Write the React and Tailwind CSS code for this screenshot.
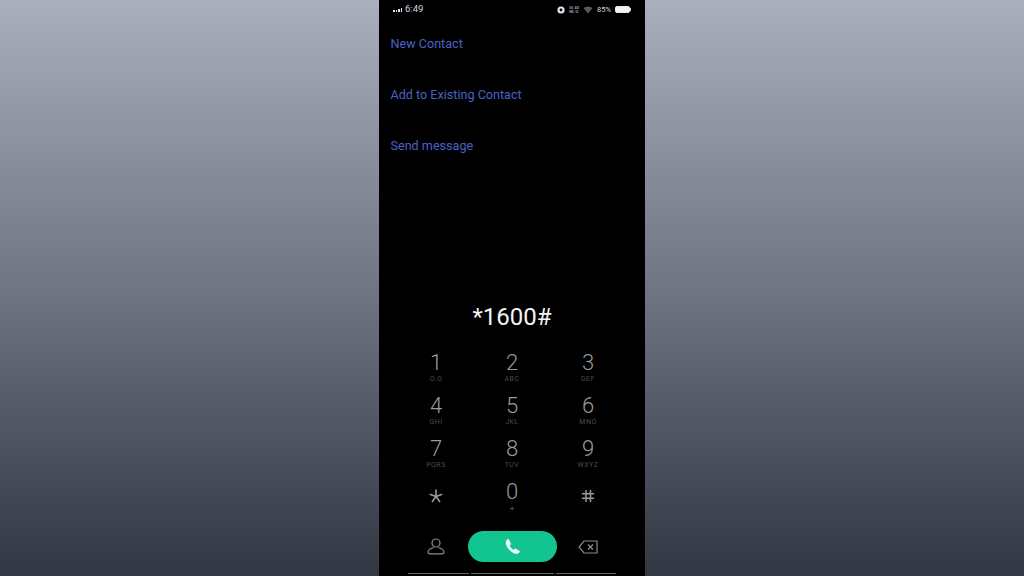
import React from 'react';

const keys = [
  ['1', 'O.O'],
  ['2', 'ABC'],
  ['3', 'DEF'],
  ['4', 'GHI'],
  ['5', 'JKL'],
  ['6', 'MNO'],
  ['7', 'PQRS'],
  ['8', 'TUV'],
  ['9', 'WXYZ'],
];

const StatusBar = () => (
  <div className="h-[17px] mt-[1px] mb-[1px] flex items-center justify-between pl-[14px] pr-[14px] text-[8px] text-gray-300">
    <div className="flex items-center gap-[3px]">
      <div className="flex items-end gap-[1px] h-[5px]">
        <div className="w-[1.5px] h-[2px] bg-gray-200" />
        <div className="w-[1.5px] h-[2px] bg-gray-200" />
        <div className="w-[1.5px] h-[3px] bg-gray-200" />
        <div className="w-[1.5px] h-[4px] bg-gray-200" />
      </div>
      <span className="text-[9.5px]">6:49</span>
    </div>
    <div className="flex items-center">
      <svg width="8" height="8" viewBox="0 0 8 8" className="mr-[4px]">
        <circle cx="4" cy="4" r="3.6" fill="#e5e7eb" />
        <circle cx="4" cy="4" r="1.4" fill="#000" />
      </svg>
      <div className="grid grid-cols-2 gap-x-[1px] mr-[4px] text-[3.5px] leading-[4px] font-bold text-gray-400">
        <span>56</span>
        <span>4G</span>
        <span>KB</span>
        <span>/S</span>
      </div>
      <svg width="10" height="8" viewBox="0 0 10 8" className="mr-[4px]">
        <path d="M0.5 2 Q5 -1 9.5 2 L5 7.5 Z" fill="#565a62" />
      </svg>
      <span className="text-[7.5px] mr-[4px]">85%</span>
      <div className="flex items-center">
        <div className="w-[15px] h-[7px] rounded-[2px] border border-gray-200 bg-gray-100" />
        <div className="w-[1px] h-[3px] bg-gray-300" />
      </div>
    </div>
  </div>
);

const App = () => {
  return (
    <div className="w-[1024px] h-[576px] overflow-hidden flex justify-center bg-gradient-to-b from-[#a9afbc] via-[#6f7582] to-[#323744] font-['Roboto',sans-serif]">
      <div className="w-[266px] h-full bg-black flex flex-col">
        <StatusBar />

        <div className="flex flex-col pl-[11.5px] text-[12.6px] text-[#4a60c8]">
          <div className="h-[51px] flex items-center">New Contact</div>
          <div className="h-[51px] flex items-center">Add to Existing Contact</div>
          <div className="h-[51px] flex items-center">Send message</div>
        </div>

        <div className="mt-[129px] h-[32px] flex items-center justify-center text-[24px] text-gray-100">
          *1600#
        </div>

        <div className="mt-[18px] px-[19px] grid grid-cols-3 text-[#9a9a9a]">
          {keys.map(([digit, sub]) => (
            <div key={digit} className="h-[43px] flex flex-col items-center">
              <span className="text-[22px] font-light leading-[24px]">{digit}</span>
              <span className="text-[7px] leading-[8px] tracking-[0.5px] text-[#4d4d4d]">{sub}</span>
            </div>
          ))}
          <div className="h-[43px] flex items-center justify-center pb-[11px]">
            <svg width="14" height="14" viewBox="0 0 14 14" fill="none" stroke="#9a9a9a" strokeWidth="1.6">
              <path d="M7 0.5V7.5M7 7.5L0.8 5.3M7 7.5L13.2 5.3M7 7.5L3 13M7 7.5L11 13" />
            </svg>
          </div>
          <div className="h-[43px] flex flex-col items-center">
            <span className="text-[22px] font-light leading-[24px]">0</span>
            <span className="text-[9px] leading-[10px] text-[#4d4d4d]">+</span>
          </div>
          <div className="h-[43px] flex items-center justify-center pb-[11px]">
            <svg width="14" height="14" viewBox="0 0 14 14" fill="none" stroke="#9a9a9a" strokeWidth="1.5">
              <path d="M5 1V13M9.5 1V13M1 4.7H13M1 9.3H13" />
            </svg>
          </div>
        </div>

        <div className="mt-[8px] px-[19px] grid grid-cols-3 items-center">
          <div className="flex justify-center">
            <svg width="18" height="17" viewBox="0 0 18 17" fill="none" stroke="#8a8a8a" strokeWidth="1.2">
              <circle cx="9" cy="5" r="4" />
              <path d="M6.5 9.5C3.5 10.5 1 12 1 14C1 15.4 2 15.8 3 15.8H15C16 15.8 17 15.4 17 14C17 12 14.5 10.5 11.5 9.5" />
            </svg>
          </div>
          <div className="flex justify-center">
            <div className="w-[89px] h-[31px] shrink-0 rounded-full bg-[#12c48f] flex items-center justify-center">
              <svg width="17" height="17" viewBox="0 0 24 24" fill="#f3fff9">
                <path d="M6.6 1.8L9.8 7.6C10.1 8.1 10 8.7 9.5 9.1L8 10.4C8.7 12.9 11 15.6 13.6 16.6L15.1 15.2C15.5 14.8 16.1 14.7 16.6 15L22 18.2C22.6 18.6 22.7 19.3 22.3 19.8C20.8 21.8 18.6 22.8 16.2 22.2C9.9 20.7 3.6 13.7 2.6 7.6C2.2 5.2 3.2 3.2 5 1.6C5.5 1.2 6.2 1.3 6.6 1.8Z" />
              </svg>
            </div>
          </div>
          <div className="flex justify-center">
            <svg width="20" height="14" viewBox="0 0 20 14" fill="none" stroke="#8a8a8a" strokeWidth="1.2">
              <path d="M6 1H19V13H6L1 7Z" />
              <path d="M10 4.5L15 9.5M15 4.5L10 9.5" strokeWidth="1.4" />
            </svg>
          </div>
        </div>

        <div className="mt-auto mb-[2px] flex justify-center gap-[2px]">
          <div className="w-[61px] h-[1px] bg-[#666666]" />
          <div className="w-[83px] h-[1px] bg-[#666666]" />
          <div className="w-[60px] h-[1px] bg-[#666666]" />
        </div>
      </div>
    </div>
  );
};

export default App;
